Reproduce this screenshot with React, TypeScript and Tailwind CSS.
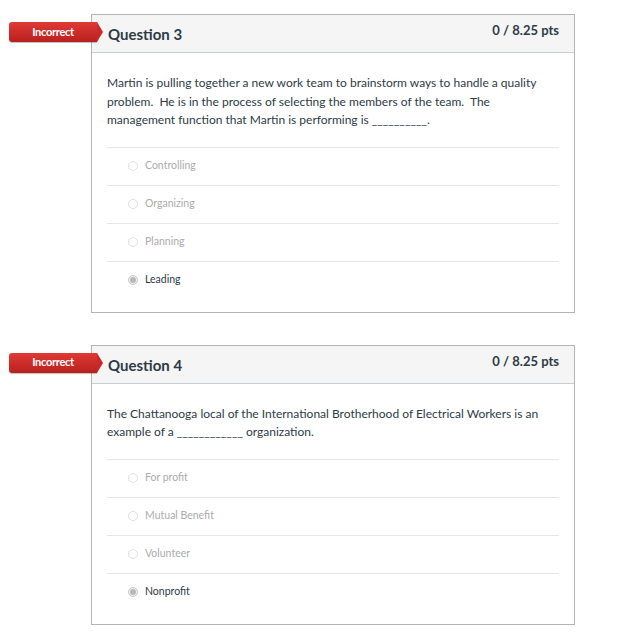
import React from 'react';

type Question = {
  num: number;
  text: React.ReactNode;
  answers: string[];
  selected: number;
};

const QUESTIONS: Question[] = [
  {
    num: 3,
    text: (
      <>
        Martin is pulling together a new work team to brainstorm ways to handle a quality problem.&nbsp; He is in the
        process of selecting the members of the team.&nbsp; The management function that Martin is performing is
        __________.
      </>
    ),
    answers: ['Controlling', 'Organizing', 'Planning', 'Leading'],
    selected: 3,
  },
  {
    num: 4,
    text: (
      <>
        The Chattanooga local of the International Brotherhood of Electrical Workers is an example of a ____________
        organization.
      </>
    ),
    answers: ['For profit', 'Mutual Benefit', 'Volunteer', 'Nonprofit'],
    selected: 3,
  },
];

const Radio = ({ checked }: { checked: boolean }) => (
  <span
    className={`w-[10px] h-[10px] rounded-full border flex items-center justify-center ${
      checked ? 'border-[#c8c8c8] bg-[#f0f0f0]' : 'border-[#e0e0e0] bg-white'
    }`}
  >
    {checked && <span className="w-[6px] h-[6px] rounded-full bg-[#b8b8b8]"></span>}
  </span>
);

const Badge = () => (
  <div className="absolute left-[-83px] top-[7px] flex items-center">
    <div className="w-[88px] h-[20px] rounded-l-[3px] bg-gradient-to-b from-[#e03a36] to-[#b8201d] text-white text-[11px] font-bold flex items-center justify-center tracking-[-0.3px] shadow-[0_1px_1px_rgba(0,0,0,0.25)]">
      Incorrect
    </div>
    <div className="w-0 h-0 border-y-[10px] border-y-transparent border-l-[6px] border-l-[#c92a27]"></div>
  </div>
);

const QuestionCard = ({ q }: { q: Question }) => (
  <div className="relative ml-[91px] w-[484px] border border-[#b4b4b4] bg-white">
    <Badge />
    <div className="h-[38px] bg-[#f5f5f5] border-b border-[#c7cdd1] flex justify-between pl-[16px] pr-[15px]">
      <div className="pt-[9px] text-[15px] font-bold text-[#2d3b45] leading-[20px]">Question {q.num}</div>
      <div className="pt-[6px] text-[13px] font-bold text-[#2d3b45] leading-[18px]">0 / 8.25 pts</div>
    </div>
    <div className="px-[15px] pt-[21px] pb-[13px]">
      <p className="text-[12px] leading-[18.5px] text-[#2d3b45] pr-[4px]">{q.text}</p>
      <div className="mt-[17px]">
        {q.answers.map((a, i) => (
          <div key={a} className="h-[38px] border-t border-[#e4e6e8] flex items-center pl-[21px] gap-[7px]">
            <Radio checked={i === q.selected} />
            <span className={`text-[10.5px] ${i === q.selected ? 'text-[#2d3b45]' : 'text-[#ababab]'}`}>{a}</span>
          </div>
        ))}
      </div>
    </div>
  </div>
);

const App: React.FC = () => {
  return (
    <div className="min-h-screen bg-white pt-[14px]" style={{ fontFamily: 'Lato, "Liberation Sans", sans-serif' }}>
      <div className="flex flex-col gap-[32px]">
        {QUESTIONS.map((q) => (
          <QuestionCard key={q.num} q={q} />
        ))}
      </div>
    </div>
  );
};

export default App;
